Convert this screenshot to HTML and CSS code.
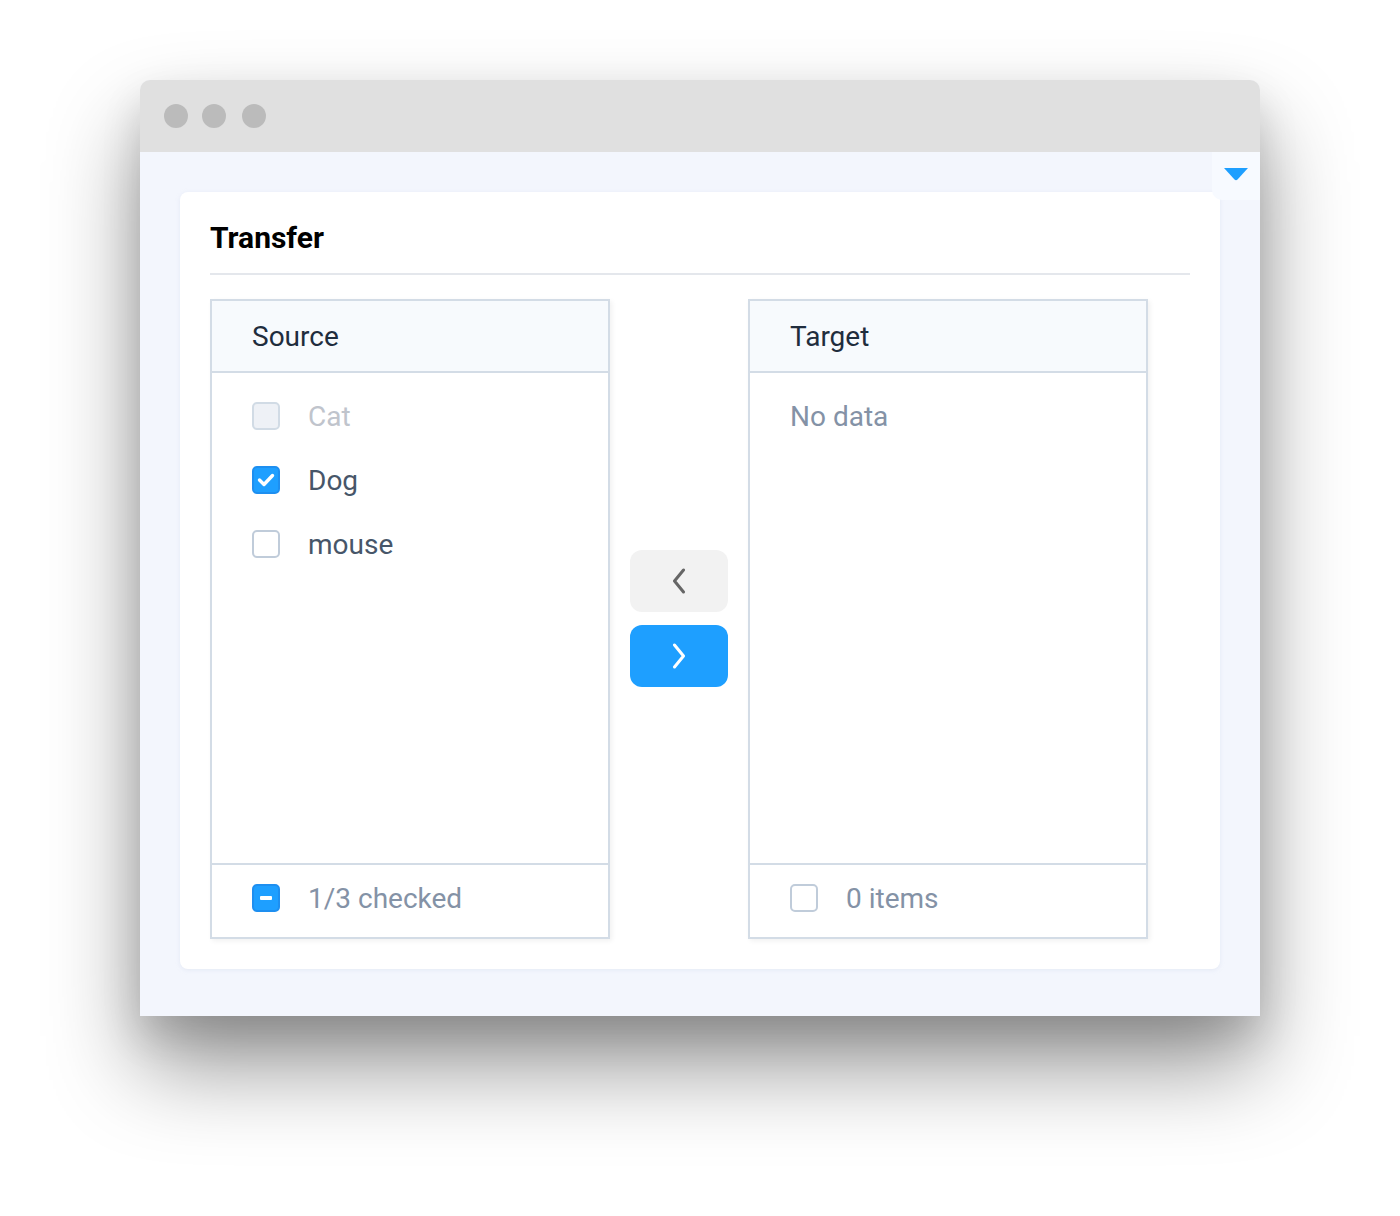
FILE: index.html
```html
<!DOCTYPE html>
<html>
<head>
<meta charset="utf-8">
<link rel="stylesheet" href="styles.css">
</head>
<body>
<div class="window">
  <div class="titlebar">
    <span class="dot"></span><span class="dot"></span><span class="dot"></span>
  </div>
  <div class="content">
    <div class="toggle">
      <svg width="26" height="14" viewBox="0 0 26 14"><path d="M1 1 H25 L14.5 12.5 Q13 14 11.5 12.5 Z" fill="#1e9fff"/></svg>
    </div>
    <div class="card">
      <h2 class="card-title">Transfer</h2>
      <div class="transfer">
        <div class="panel">
          <div class="panel-head">Source</div>
          <div class="panel-body">
            <div class="item disabled"><span class="cb cb-disabled"></span><span class="label">Cat</span></div>
            <div class="item"><span class="cb cb-checked"><svg width="18" height="14" viewBox="0 0 18 14"><path d="M2.5 7 L7 11.5 L15.5 2.5" fill="none" stroke="#fff" stroke-width="3.4" stroke-linecap="round" stroke-linejoin="round"/></svg></span><span class="label">Dog</span></div>
            <div class="item"><span class="cb"></span><span class="label">mouse</span></div>
          </div>
          <div class="panel-foot"><span class="cb cb-checked"><span class="dash"></span></span><span class="foot-label">1/3 checked</span></div>
        </div>
        <div class="buttons">
          <button class="btn btn-gray"><svg width="14" height="26" viewBox="0 0 14 26"><path d="M11.5 2 L2.5 13 L11.5 24" fill="none" stroke="#666" stroke-width="3" stroke-linecap="round" stroke-linejoin="round"/></svg></button>
          <button class="btn btn-blue"><svg width="14" height="26" viewBox="0 0 14 26"><path d="M2.5 2 L11.5 13 L2.5 24" fill="none" stroke="#fff" stroke-width="3" stroke-linecap="round" stroke-linejoin="round"/></svg></button>
        </div>
        <div class="panel">
          <div class="panel-head">Target</div>
          <div class="panel-body">
            <div class="empty">No data</div>
          </div>
          <div class="panel-foot"><span class="cb"></span><span class="foot-label">0 items</span></div>
        </div>
      </div>
    </div>
  </div>
</div>
</body>
</html>
```

FILE: styles.css
```css
* { box-sizing: border-box; }
html, body { margin: 0; padding: 0; background: #fff; }
body {
  font-family: Roboto, "Liberation Sans", sans-serif;
  padding: 80px 140px 0 140px;
  min-height: 1216px;
}
.window {
  width: 1120px;
  height: 936px;
  border-radius: 10px 10px 0 0;
  background: #f3f6fd;
  box-shadow: 0 50px 90px rgba(0,0,0,0.42), 0 20px 40px rgba(0,0,0,0.12);
  display: flex;
  flex-direction: column;
}
.titlebar {
  height: 72px;
  background: #e0e0e0;
  border-radius: 10px 10px 0 0;
  display: flex;
  align-items: center;
  padding-left: 24px;
  gap: 14px;
}
.dot {
  width: 24px;
  height: 24px;
  border-radius: 50%;
  background: #bbbbbb;
}
.dot:nth-child(3) { margin-left: 2px; }
.content {
  position: relative;
  padding: 40px 40px 0 40px;
  flex: 1;
}
.toggle {
  position: absolute;
  top: 0;
  right: 0;
  width: 48px;
  height: 48px;
  background: #f7faff;
  border-radius: 0 0 0 10px;
  display: flex;
  align-items: center;
  justify-content: center;
  padding-bottom: 4px;
}
.card {
  background: #fff;
  border-radius: 8px;
  padding: 28px 30px 30px 30px;
  box-shadow: 0 1px 4px rgba(200,210,230,0.35);
}
.card-title {
  margin: 0;
  font-size: 30px;
  font-weight: 700;
  color: #000;
  line-height: 36px;
  padding-bottom: 17px;
  border-bottom: 2px solid #e4e7ec;
}
.transfer {
  display: flex;
  align-items: center;
  gap: 20px;
  margin-top: 24px;
}
.panel {
  width: 400px;
  height: 640px;
  border: 2px solid #d3dce6;
  display: flex;
  flex-direction: column;
  box-shadow: 2px 2px 5px rgba(0,0,0,0.06);
}
.panel-head {
  height: 72px;
  background: #f7fafd;
  border-bottom: 2px solid #d3dce6;
  font-size: 28px;
  color: #1f2d3d;
  display: flex;
  align-items: center;
  padding-left: 40px;
}
.panel-body {
  flex: 1;
  padding-top: 11px;
}
.item {
  height: 64px;
  display: flex;
  align-items: center;
  padding-left: 40px;
}
.label {
  font-size: 28px;
  color: #475669;
  margin-left: 28px;
}
.item.disabled .label { color: #c0c4cc; }
.cb {
  width: 28px;
  height: 28px;
  border: 2px solid #c0ccda;
  border-radius: 5px;
  background: #fff;
  display: inline-flex;
  align-items: center;
  justify-content: center;
  flex: none;
}
.cb-disabled {
  background: #eef1f6;
  border-color: #d1dbe5;
}
.cb-checked {
  background: #1e9fff;
  border-color: #1e8ff0;
}
.dash {
  width: 12px;
  height: 4px;
  background: #fff;
  border-radius: 1px;
}
.empty {
  font-size: 28px;
  color: #8492a6;
  padding-left: 40px;
  height: 64px;
  display: flex;
  align-items: center;
}
.panel-foot {
  height: 74px;
  border-top: 2px solid #d3dce6;
  display: flex;
  align-items: center;
  padding-left: 40px;
  padding-bottom: 6px;
}
.foot-label {
  font-size: 28px;
  color: #8492a6;
  margin-left: 28px;
}
.buttons {
  display: flex;
  flex-direction: column;
  gap: 13px;
  margin-bottom: 2px;
}
.btn {
  width: 98px;
  height: 62px;
  border: none;
  border-radius: 12px;
  display: flex;
  align-items: center;
  justify-content: center;
  padding: 0;
}
.btn-gray { background: #f2f2f2; }
.btn-blue { background: #1e9fff; }
```
